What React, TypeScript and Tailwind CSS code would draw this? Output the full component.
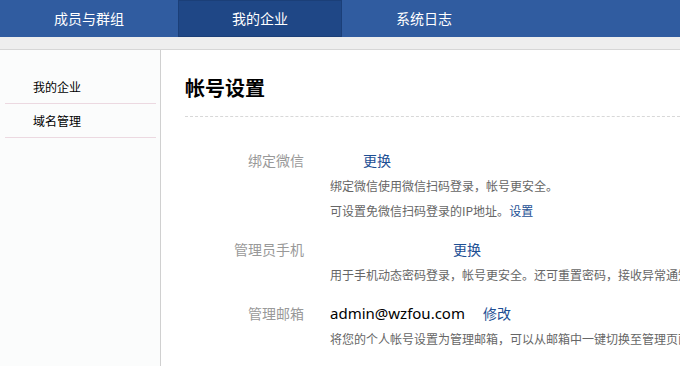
const tabs = [
  { label: "成员与群组", w: "w-[178px]", active: false },
  { label: "我的企业", w: "w-[164px]", active: true },
  { label: "系统日志", w: "w-[164px]", active: false },
];

const menu = ["我的企业", "域名管理"];

function Row({
  label,
  children,
  notes,
}: {
  label: string;
  children: React.ReactNode;
  notes: React.ReactNode[];
}) {
  return (
    <div className="mb-[13px] flex">
      <div className="w-[119px] shrink-0 text-right text-[14px] leading-[26px] text-[#999]">{label}</div>
      <div className="ml-[26px]">
        <div className="flex items-center text-[14px] leading-[26px]">{children}</div>
        {notes.map((n, i) => (
          <div key={i} className="text-[12px] leading-[25px] text-[#666]">
            {n}
          </div>
        ))}
      </div>
    </div>
  );
}

export default function App() {
  return (
    <div
      className="flex h-[366px] w-[680px] flex-col overflow-hidden bg-white whitespace-nowrap"
      style={{ fontFamily: '"Noto Sans CJK SC", "Noto Sans", sans-serif' }}
    >
      <div className="flex h-[37px] shrink-0 bg-[#305ca0]">
        {tabs.map((t) => (
          <div
            key={t.label}
            className={`${t.w} flex items-center justify-center text-[14px] text-white ${
              t.active ? "bg-[#1f4786] shadow-[inset_0_0_0_1px_#1b3f78]" : ""
            }`}
          >
            {t.label}
          </div>
        ))}
      </div>
      <div className="h-[13px] shrink-0 border-b border-[#d6d6d6] bg-[#eeeeee]" />

      <div className="flex min-h-0 flex-1">
        <div className="w-[161px] shrink-0 border-r border-[#d0d0d0] bg-[#fbfcfc] pt-[20px]">
          {menu.map((m) => (
            <div
              key={m}
              className="ml-[5px] mr-[4px] h-[34px] border-b border-[#ecd9e1] pl-[28px] text-[12px] leading-[34px] text-black"
            >
              {m}
            </div>
          ))}
        </div>

        <div className="min-w-0 flex-1 pl-[24px] pt-[24px]">
          <div className="border-b border-dashed border-[#d8d8d8] pb-[14px] text-[20px] font-bold leading-[28px] text-black">
            帐号设置
          </div>
          <div className="pt-[30px]">
            <Row
              label="绑定微信"
              notes={[
                "绑定微信使用微信扫码登录，帐号更安全。",
                <>
                  可设置免微信扫码登录的IP地址。<span className="text-[#1d4f94]">设置</span>
                </>,
              ]}
            >
              <span className="inline-block w-[33px]" />
              <span className="text-[#1d4f94]">更换</span>
            </Row>
            <Row
              label="管理员手机"
              notes={["用于手机动态密码登录，帐号更安全。还可重置密码，接收异常通知等。"]}
            >
              <span className="inline-block w-[123px]" />
              <span className="text-[#1d4f94]">更换</span>
            </Row>
            <Row
              label="管理邮箱"
              notes={["将您的个人帐号设置为管理邮箱，可以从邮箱中一键切换至管理页面。"]}
            >
              <span className="text-[15px] text-black" style={{ fontFamily: '"Noto Sans", sans-serif' }}>
                admin@wzfou.com
              </span>
              <span className="ml-[18px] text-[#1d4f94]">修改</span>
            </Row>
          </div>
        </div>
      </div>
    </div>
  );
}
